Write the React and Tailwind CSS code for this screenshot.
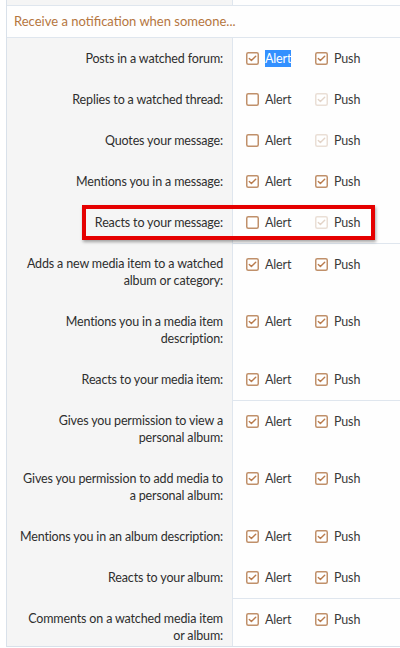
import React from "react";

const rows = [
  { label: ["Posts in a watched forum:"], a: "on", p: "on", selected: true },
  { label: ["Replies to a watched thread:"], a: "off", p: "dis" },
  { label: ["Quotes your message:"], a: "off", p: "dis" },
  { label: ["Mentions you in a message:"], a: "on", p: "on" },
  { label: ["Reacts to your message:"], a: "off", p: "dis" },
  { label: ["Adds a new media item to a watched", "album or category:"], a: "on", p: "on", sep: true },
  { label: ["Mentions you in a media item", "description:"], a: "on", p: "on" },
  { label: ["Reacts to your media item:"], a: "on", p: "on" },
  { label: ["Gives you permission to view a", "personal album:"], a: "on", p: "on", sep: true },
  { label: ["Gives you permission to add media to", "a personal album:"], a: "on", p: "on" },
  { label: ["Mentions you in an album description:"], a: "on", p: "on" },
  { label: ["Reacts to your album:"], a: "on", p: "on" },
  { label: ["Comments on a watched media item", "or album:"], a: "on", p: "on", sep: true },
];

function Box({ state }) {
  const border = state === "dis" ? "#eadfd6" : "#c0906a";
  const check = state === "dis" ? "#e3d4c8" : "#b97c4e";
  return (
    <svg width="13" height="13" viewBox="0 0 13 13" className="shrink-0">
      <rect x="0.75" y="0.75" width="11.5" height="11.5" rx="1.5" fill="#fff" stroke={border} strokeWidth="1.5" />
      {state !== "off" && (
        <path d="M3.3 6.6 L5.4 8.6 L9.7 4.2" fill="none" stroke={check} strokeWidth="1.4" strokeLinecap="round" strokeLinejoin="round" />
      )}
    </svg>
  );
}

function Opt({ state, text, selected, wide }) {
  return (
    <div className={`flex items-center gap-[6px] ${wide ? "w-[69px]" : ""}`}>
      <Box state={state} />
      <span
        className={`leading-[17px] ${selected ? "bg-[#3390ff] text-white" : "text-[#3a3a3a]"}`}
      >
        {text}
      </span>
    </div>
  );
}

export default function App() {
  return (
    <div
      className="relative w-[400px] h-[648px] overflow-hidden bg-white text-[12.5px] tracking-[-0.15px] text-[#2e2e2e]"
      style={{ fontFamily: 'Lato, "Noto Sans", sans-serif' }}
    >
      <div className="ml-[6px] border-l border-b border-[#d9e1ea] h-[647px] overflow-hidden">
        <div className="grid grid-cols-[225px_1fr] h-[6px] border-b border-[#dfe6ee]">
          <div className="bg-[#f5f5f5]" />
          <div className="bg-[#fefefe] border-l border-[#dfe6ee]" />
        </div>
        <div className="h-[32px] flex items-center pl-[7px] bg-[#fefefe] border-b border-[#dfe6ee] text-[13px] tracking-normal text-[#b5763f]">
          Receive a notification when someone...
        </div>
        {rows.map((r, i) => (
          <div key={i} className="grid grid-cols-[225px_1fr]">
            <div className="bg-[#f5f5f5] py-[12px] pr-[9px] text-right leading-[17px] whitespace-nowrap">
              {r.label.map((l, j) => (
                <div key={j}>{l}</div>
              ))}
            </div>
            <div
              className={`bg-[#fefefe] border-l border-[#dfe6ee] pl-[13px] pt-[12px] flex items-start ${
                r.sep ? "border-t" : ""
              }`}
            >
              <Opt state={r.a} text="Alert" selected={r.selected} wide />
              <Opt state={r.p} text="Push" />
            </div>
          </div>
        ))}
      </div>
      <div className="absolute left-[82px] top-[205px] w-[293px] h-[35px] border-[4px] border-[#e50000] shadow-[1px_2px_3px_rgba(0,0,0,0.35)]" />
    </div>
  );
}
